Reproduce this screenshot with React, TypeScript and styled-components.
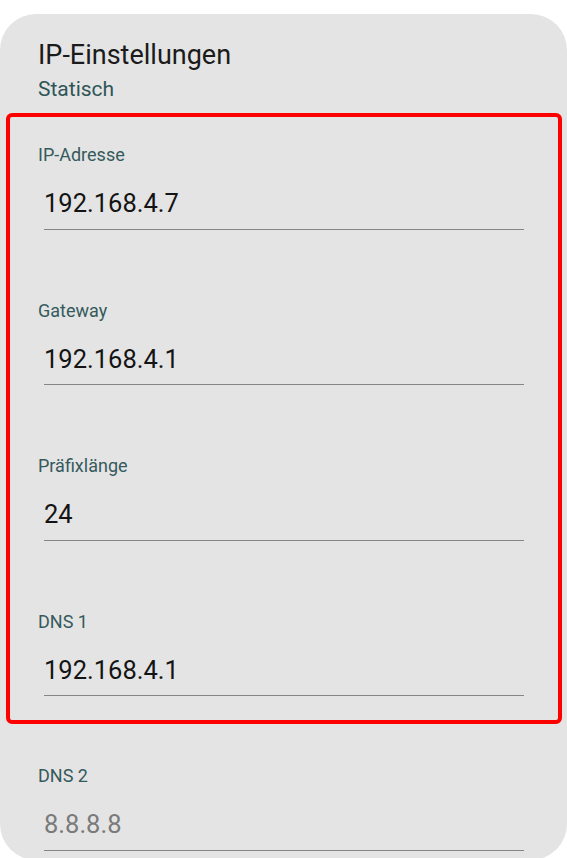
import React from "react";
import styled, { createGlobalStyle } from "styled-components";

const GlobalStyle = createGlobalStyle`
  html, body {
    margin: 0;
    padding: 0;
    background: #ffffff;
  }
  body {
    font-family: Roboto, "Noto Sans", "Liberation Sans", sans-serif;
    -webkit-font-smoothing: antialiased;
  }
`;

const Page = styled.div`
  padding-top: 14px;
  height: 858px;
  overflow: hidden;
  box-sizing: border-box;
`;

const Card = styled.section`
  background: #e4e4e4;
  border-radius: 36px;
  height: 846px;
  padding-top: 25px;
  box-sizing: border-box;
  display: flex;
  flex-direction: column;
`;

const Header = styled.header`
  padding: 0 38px;
  display: flex;
  flex-direction: column;
`;

const Title = styled.h1`
  margin: 0;
  font-size: 27px;
  line-height: 32px;
  font-weight: 400;
  color: #1b1b1b;
`;

const Subtitle = styled.div`
  margin-top: 5px;
  font-size: 21px;
  line-height: 26px;
  color: #2f5558;
`;

const Group = styled.div<{ $highlight?: boolean; $offset?: number }>`
  margin: ${(p) => p.$offset ?? 0}px 5px 0 6px;
  border: 4px solid ${(p) => (p.$highlight ? "#ff0000" : "transparent")};
  border-radius: 6px;
  display: flex;
  flex-direction: column;
  gap: 19px;
`;

const Field = styled.div`
  padding: 27px 34px 24px 28px;
  display: flex;
  flex-direction: column;
`;

const Label = styled.label`
  font-size: 18px;
  line-height: 22px;
  color: #355a5c;
`;

const Value = styled.div<{ $hint?: boolean }>`
  margin: 22px 0 0 6px;
  padding-bottom: 10.5px;
  border-bottom: 1.5px solid #858585;
  font-size: 25.5px;
  line-height: 30px;
  color: ${(p) => (p.$hint ? "#7a7a7a" : "#141414")};
`;

type FieldData = { label: string; value: string; hint?: boolean };

const highlighted: FieldData[] = [
  { label: "IP-Adresse", value: "192.168.4.7" },
  { label: "Gateway", value: "192.168.4.1" },
  { label: "Präfixlänge", value: "24" },
  { label: "DNS 1", value: "192.168.4.1" },
];

const rest: FieldData[] = [{ label: "DNS 2", value: "8.8.8.8", hint: true }];

const FieldRow = ({ label, value, hint }: FieldData) => (
  <Field>
    <Label>{label}</Label>
    <Value $hint={hint}>{value}</Value>
  </Field>
);

export default function App() {
  return (
    <>
      <GlobalStyle />
      <Page>
        <Card>
          <Header>
            <Title>IP-Einstellungen</Title>
            <Subtitle>Statisch</Subtitle>
          </Header>
          <Group $highlight $offset={11}>
            {highlighted.map((f) => (
              <FieldRow key={f.label} {...f} />
            ))}
          </Group>
          <Group $offset={10}>
            {rest.map((f) => (
              <FieldRow key={f.label} {...f} />
            ))}
          </Group>
        </Card>
      </Page>
    </>
  );
}
